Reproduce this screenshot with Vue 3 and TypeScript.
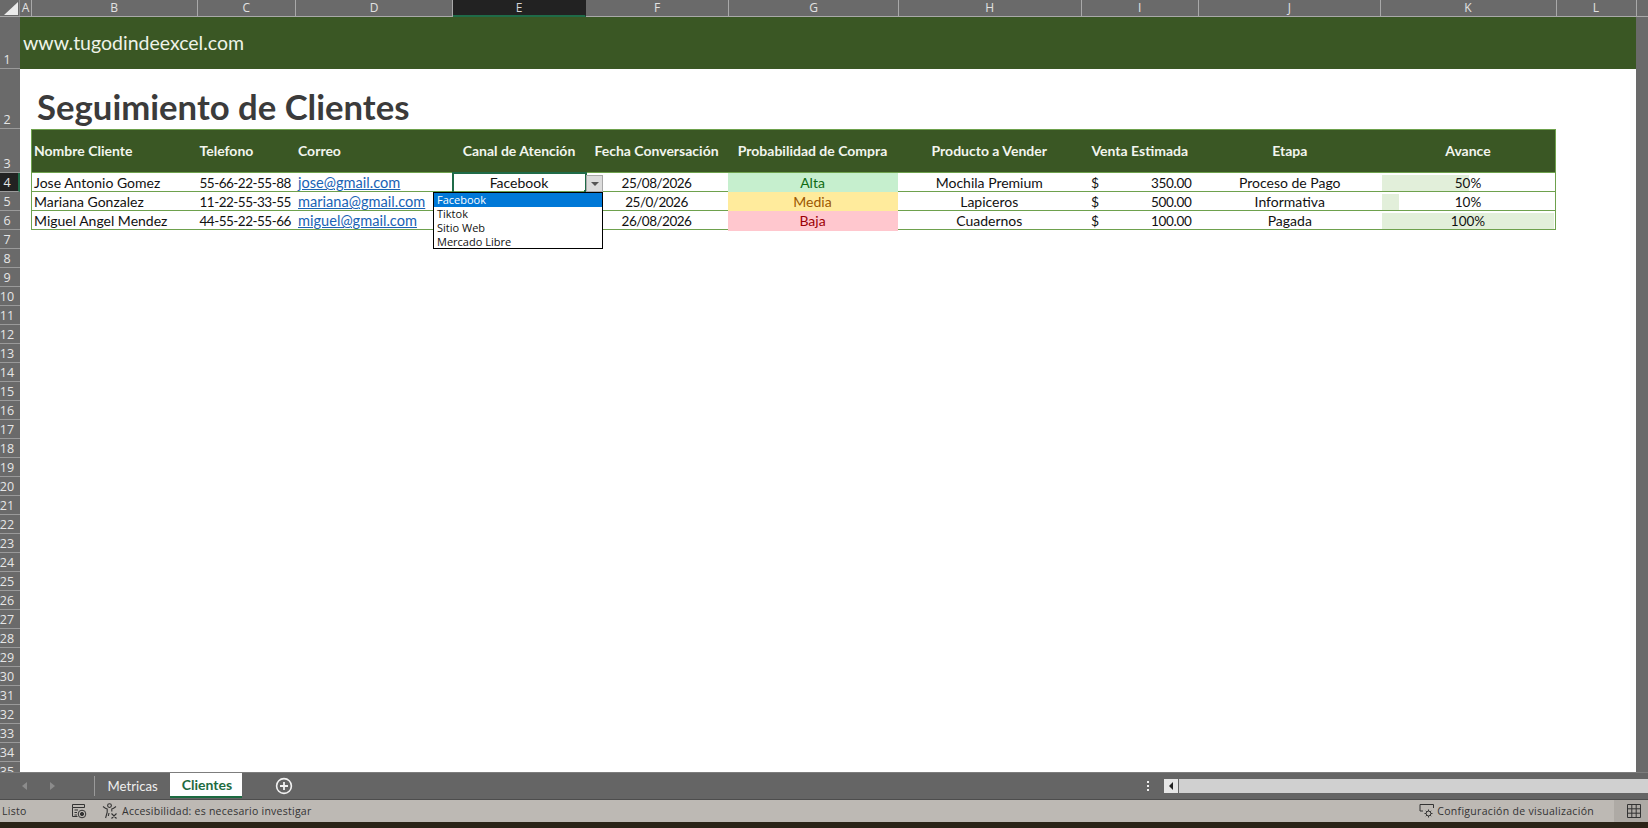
<script setup lang="ts">
interface Cliente {
  nombre: string;
  telefono: string;
  correo: string;
  canal: string;
  fecha: string;
  prob: string;
  probClass: string;
  producto: string;
  venta: string;
  etapa: string;
  avance: number;
}

const columnas = [
  { l: 'A', w: 12 },
  { l: 'B', w: 165.5 },
  { l: 'C', w: 98.5 },
  { l: 'D', w: 157 },
  { l: 'E', w: 133 },
  { l: 'F', w: 143 },
  { l: 'G', w: 170 },
  { l: 'H', w: 182.5 },
  { l: 'I', w: 117.5 },
  { l: 'J', w: 181.5 },
  { l: 'K', w: 176 },
  { l: 'L', w: 80 },
];

const filas = Array.from({ length: 35 }, (_, i) => i + 1);
const alturaFila = (n: number) => {
  if (n === 1) return 52;
  if (n === 2) return 60;
  if (n === 3) return 44;
  return 19;
};

const clientes: Cliente[] = [
  { nombre: 'Jose Antonio Gomez', telefono: '55-66-22-55-88', correo: 'jose@gmail.com', canal: 'Facebook', fecha: '25/08/2026', prob: 'Alta', probClass: 'alta', producto: 'Mochila Premium', venta: '350.00', etapa: 'Proceso de Pago', avance: 50 },
  { nombre: 'Mariana Gonzalez', telefono: '11-22-55-33-55', correo: 'mariana@gmail.com', canal: '', fecha: '25/0/2026', prob: 'Media', probClass: 'media', producto: 'Lapiceros', venta: '500.00', etapa: 'Informativa', avance: 10 },
  { nombre: 'Miguel Angel Mendez', telefono: '44-55-22-55-66', correo: 'miguel@gmail.com', canal: '', fecha: '26/08/2026', prob: 'Baja', probClass: 'baja', producto: 'Cuadernos', venta: '100.00', etapa: 'Pagada', avance: 100 },
];

const opciones = ['Facebook', 'Tiktok', 'Sitio Web', 'Mercado Libre'];
</script>

<template>
  <div class="excel">
    <div class="col-heads">
      <div class="corner"><span class="corner-tri"></span></div>
      <div
        v-for="c in columnas"
        :key="c.l"
        class="col-head"
        :class="{ active: c.l === 'E' }"
        :style="{ width: c.w + 'px' }"
      >{{ c.l }}</div>
    </div>

    <div class="main">
      <div class="row-heads">
        <div
          v-for="n in filas"
          :key="n"
          class="row-head"
          :class="{ active: n === 4 }"
          :style="{ height: alturaFila(n) + 'px' }"
        >{{ n }}</div>
      </div>

      <div class="sheet">
        <div class="banner">www.tugodindeexcel.com</div>
        <div class="title-row"><h1 class="title">Seguimiento de Clientes</h1></div>

        <div class="tabla">
          <div class="fila head">
            <div class="left">Nombre Cliente</div>
            <div class="left">Telefono</div>
            <div class="left">Correo</div>
            <div>Canal de Atención</div>
            <div>Fecha Conversación</div>
            <div>Probabilidad de Compra</div>
            <div>Producto a Vender</div>
            <div>Venta Estimada</div>
            <div>Etapa</div>
            <div>Avance</div>
          </div>
          <div v-for="c in clientes" :key="c.nombre" class="fila dato">
            <div class="left">{{ c.nombre }}</div>
            <div class="left num">{{ c.telefono }}</div>
            <div class="left"><span class="link">{{ c.correo }}</span></div>
            <div :class="{ seleccion: c.canal }">{{ c.canal }}</div>
            <div class="num">{{ c.fecha }}</div>
            <div :class="c.probClass">{{ c.prob }}</div>
            <div>{{ c.producto }}</div>
            <div class="venta"><span>$</span><span class="importe">{{ c.venta }}</span></div>
            <div>{{ c.etapa }}</div>
            <div class="avance">
              <span class="barra" :style="{ width: c.avance + '%' }"></span>
              <span class="pct">{{ c.avance }}%</span>
            </div>
          </div>

          <div class="combo-btn"><span class="combo-arrow"></span></div>
          <ul class="combo-list">
            <li v-for="(o, i) in opciones" :key="o" :class="{ on: i === 0 }">{{ o }}</li>
          </ul>
        </div>
      </div>

      <div class="vscroll"></div>
    </div>

    <div class="tabs">
      <div class="nav-arrow"><span class="arrow-l"></span></div>
      <div class="nav-arrow"><span class="arrow-r"></span></div>
      <div class="tab-sep"></div>
      <div class="tab">Metricas</div>
      <div class="tab current">Clientes</div>
      <svg class="plus" viewBox="0 0 18 18" fill="none" stroke="#f2f2f2">
        <circle cx="9" cy="9" r="7.4" stroke-width="1.6" />
        <path d="M9 5v8M5 9h8" stroke-width="1.8" />
      </svg>
      <div class="dots"><i></i><i></i><i></i></div>
      <div class="hscroll">
        <div class="hbtn"><span class="hbtn-tri"></span></div>
        <div class="htrack"></div>
      </div>
    </div>

    <div class="status">
      <span class="listo">Listo</span>
      <svg class="st-ico macro" viewBox="0 0 16 16" fill="none" stroke="#333">
        <path d="M1.5 1.5h12v3h-12zM1.5 4.5v9h5M3.5 7h3.5M3.5 9.5h2.5M3.5 12h2.5" />
        <circle cx="11" cy="11" r="3.8" />
        <circle cx="11" cy="11" r="1.6" fill="#333" />
      </svg>
      <svg class="st-ico acc" viewBox="0 0 16 16" fill="none" stroke="#333" stroke-width="1.1">
        <circle cx="7.5" cy="2.6" r="1.9" />
        <path d="M1 3.5c2 1.6 3.3 2.3 4.2 2.5v3.2L3.6 15M14 3.5c-2 1.6-3.3 2.3-4.2 2.5v2.6M7 10l-.7 3M9.5 10.5l5 5M14.5 10.5l-5 5" />
      </svg>
      <span class="acc-text">Accesibilidad: es necesario investigar</span>
      <div class="status-right">
        <svg class="st-ico cfg" viewBox="0 0 16 16" fill="none" stroke="#333">
          <path d="M1 8V1.5h13.5V5M1 8h3" />
          <circle cx="9.5" cy="10.5" r="2.4" />
          <path d="M9.5 6.5v1.5M9.5 13v1.5M5.5 10.5H7M12 10.5h1.5M6.8 7.8l1 1M11.2 12.2l1 1M12.2 7.8l-1 1M7.8 12.2l-1 1" />
        </svg>
        <span class="cfg-text">Configuración de visualización</span>
        <div class="grid-view">
          <svg viewBox="0 0 14 14" fill="none" stroke="#333">
            <path d="M.5.5h13v13H.5zM.5 4.8h13M.5 9.2h13M4.8.5v13M9.2.5v13" />
          </svg>
        </div>
      </div>
    </div>
    <div class="strip"></div>
  </div>
</template>

<style>
html, body { margin: 0; padding: 0; overflow: hidden; background: #fff; }
</style>

<style scoped>
.excel {
  width: 1648px;
  height: 828px;
  display: flex;
  flex-direction: column;
  overflow: hidden;
  font-family: "Lato", "Open Sans", sans-serif;
  background: #fff;
}

/* encabezados de columna */
.col-heads {
  display: flex;
  height: 17px;
  flex: none;
  background: #6a6a6a;
  border-bottom: 1px solid #a9a9a9;
  box-sizing: border-box;
}
.corner {
  width: 20px;
  flex: none;
  position: relative;
  border-right: 1px solid #8d8d8d;
  box-sizing: border-box;
}
.corner-tri {
  position: absolute;
  right: 1px;
  bottom: 1px;
  width: 14px;
  height: 13px;
  background: #ebebeb;
  clip-path: polygon(100% 0, 100% 100%, 0 100%);
}
.col-head {
  box-sizing: border-box;
  flex: none;
  text-align: center;
  color: #e2e2e2;
  font: 12px/15px "Open Sans", sans-serif;
  border-right: 1px solid #a9a9a9;
}
.col-head.active {
  background: #222;
  border-bottom: 2px solid #1f6b48;
  height: 17px;
  color: #d4d4d4;
  border-right-color: #222;
}

.main {
  flex: 1;
  min-height: 0;
  display: flex;
  overflow: hidden;
}

/* encabezados de fila */
.row-heads {
  width: 20px;
  flex: none;
  background: #6a6a6a;
  overflow: hidden;
}
.row-head {
  box-sizing: border-box;
  border-bottom: 1px solid #9a9a9a;
  color: #e6e6e6;
  font: 12.5px/17px "Open Sans", sans-serif;
  display: flex;
  align-items: flex-end;
  justify-content: center;
  padding-right: 6px;
}
.row-head.active {
  background: #222;
  border-right: 2px solid #1f6b48;
  padding-right: 4px;
}

.sheet {
  width: 1616px;
  flex: none;
  position: relative;
  color: #111;
}
.banner {
  height: 52px;
  box-sizing: border-box;
  background: #3a5724;
  color: #eef3e8;
  font-size: 19.5px;
  line-height: 52px;
  padding-left: 3px;
}
.title-row {
  height: 60px;
  padding-left: 17px;
  display: flex;
  align-items: flex-end;
}
.title {
  margin: 0 0 2px;
  font-size: 34.7px;
  line-height: 40px;
  font-weight: 700;
  color: #3b3b3b;
}

.tabla {
  position: relative;
  width: 1525px;
  margin-left: 11px;
  box-sizing: border-box;
  border: solid #6ea14d;
  border-width: 1px 1px 0;
}
.fila {
  display: grid;
  grid-template-columns: 165.5px 98.5px 156.5px 133px 142px 170px 183.5px 117.5px 182.5px 1fr;
  box-sizing: border-box;
  text-align: center;
  white-space: nowrap;
}
.fila.head {
  height: 43px;
  background: #3a5724;
  color: #f2f5ee;
  font-weight: 700;
  font-size: 14px;
  line-height: 42px;
  border-bottom: 1px solid #6ea14d;
}
.fila.dato {
  height: 19px;
  font-size: 14px;
  line-height: 19px;
  border-bottom: 1px solid #6ea14d;
}
.left { text-align: left; padding-left: 2px; }
.num { font-size: 13.5px; letter-spacing: -0.5px; padding-top: 1px; line-height: 18px; }
.link { color: #1a63b5; text-decoration: underline; font-size: 14.6px; }
.alta { background: #c6efce; color: #0f6b12; }
.media { background: #ffeb9c; color: #9c5700; }
.baja { background: #ffc7ce; color: #9c0006; }
.seleccion {
  outline: 2px solid #1f6b48;
  outline-offset: -1px;
  position: relative;
}
.seleccion::after {
  content: "";
  position: absolute;
  right: -3px;
  bottom: -2px;
  width: 5px;
  height: 5px;
  background: #1f6b48;
}
.venta {
  display: flex;
  justify-content: space-between;
  padding: 0 7px 0 10px;
}
.importe { font-size: 13.5px; letter-spacing: -0.3px; padding-top: 1px; line-height: 18px; }
.avance { position: relative; }
.barra {
  position: absolute;
  left: 1px;
  top: 2px;
  bottom: 2px;
  background: #e2efda;
  max-width: calc(100% - 2px);
}
.pct { position: relative; font-size: 13.5px; }

/* desplegable de la validación */
.combo-btn {
  position: absolute;
  left: 554px;
  top: 45px;
  width: 17px;
  height: 17px;
  box-sizing: border-box;
  background: #dcdcdc;
  border: 1px solid #a8a8a8;
  display: flex;
  align-items: center;
  justify-content: center;
}
.combo-arrow {
  width: 0;
  height: 0;
  border-left: 4px solid transparent;
  border-right: 4px solid transparent;
  border-top: 4px solid #555;
}
.combo-list {
  position: absolute;
  left: 401px;
  top: 62px;
  width: 170px;
  height: 57px;
  box-sizing: border-box;
  margin: 0;
  padding: 0;
  list-style: none;
  background: #fff;
  border: 1px solid #000;
  font: 11px/14px "Open Sans", sans-serif;
  color: #111;
}
.combo-list li { padding-left: 3px; }
.combo-list li.on { background: #0078d7; color: #fff; }

.vscroll {
  flex: 1;
  background: #6a6a6a;
}

/* pestañas */
.tabs {
  height: 28px;
  flex: none;
  display: flex;
  align-items: flex-start;
  background: #656565;
  border-top: 1px solid #7d7d7d;
  border-bottom: 1px solid #4d4d4d;
  box-sizing: border-box;
  color: #eee;
}
.nav-arrow {
  width: 28px;
  height: 26px;
  flex: none;
  display: flex;
  align-items: center;
  justify-content: center;
}
.nav-arrow:first-child { margin-left: 10px; }
.arrow-l, .arrow-r {
  width: 0;
  height: 0;
  border-top: 4px solid transparent;
  border-bottom: 4px solid transparent;
}
.arrow-l { border-right: 5px solid #8c8c8c; }
.arrow-r { border-left: 5px solid #8c8c8c; }
.tab-sep {
  width: 1px;
  height: 20px;
  margin: 3px 0 0 28px;
  background: #9a9a9a;
  flex: none;
}
.tab {
  font: 13.2px/26px "Lato", sans-serif;
  padding: 0 12.5px;
  flex: none;
  height: 26px;
  box-sizing: border-box;
}
.tab.current {
  background: #fff;
  color: #1d6b41;
  font-weight: 700;
  font-size: 14px;
  padding: 0 10px 0 11.5px;
  border-bottom: 2px solid #1d6b41;
  height: 25px;
  line-height: 24px;
}
.plus { width: 18px; height: 18px; margin: 4px 0 0 33px; flex: none; }
.dots {
  display: flex;
  flex-direction: column;
  gap: 2px;
  margin: 8px 0 0 854px;
  flex: none;
}
.dots i { display: block; width: 2px; height: 2px; background: #eee; }
.hscroll {
  display: flex;
  height: 14px;
  margin: 6px 0 0 15px;
  flex: 1;
}
.hbtn {
  width: 14px;
  background: #e6e6e6;
  display: flex;
  align-items: center;
  justify-content: center;
  flex: none;
}
.hbtn-tri {
  width: 0;
  height: 0;
  border-top: 4px solid transparent;
  border-bottom: 4px solid transparent;
  border-right: 4px solid #222;
}
.htrack { flex: 1; background: #d0d0d0; margin-left: 1px; }

/* barra de estado */
.status {
  height: 22px;
  flex: none;
  display: flex;
  align-items: center;
  background: #bdb9b4;
  color: #333;
  font: 10.5px/24px "Open Sans", sans-serif;
  letter-spacing: 0.25px;
}
.listo { margin-left: 2px; width: 69px; }
.st-ico { width: 16px; height: 16px; flex: none; }
.acc { margin-left: 15px; }
.acc-text { margin-left: 4px; }
.status-right {
  margin-left: auto;
  display: flex;
  align-items: center;
  height: 100%;
}
.cfg-text { margin-left: 2px; margin-right: 20px; letter-spacing: 0.3px; }
.grid-view {
  width: 34px;
  height: 100%;
  box-sizing: border-box;
  padding-left: 6px;
  background: #aeaaa5;
  display: flex;
  align-items: center;
  justify-content: center;
}
.grid-view svg { width: 14px; height: 14px; }
.strip { height: 6px; flex: none; background: #2b2418; }
</style>
